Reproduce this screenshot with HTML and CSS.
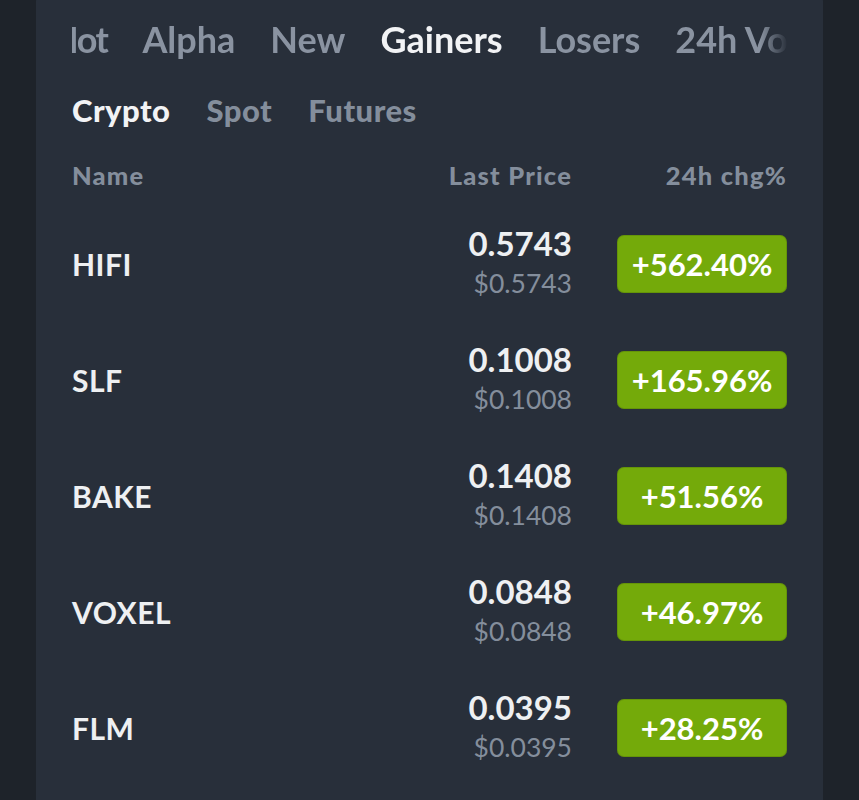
FILE: index.html
```html
<!DOCTYPE html>
<html lang="en">
<head>
<meta charset="utf-8">
<title>Markets</title>
<link rel="stylesheet" href="styles.css">
</head>
<body>
<div class="card">
  <nav class="tabs">
    <div class="tabs-strip">
      <span class="tab tab-first">Hot</span>
      <span class="tab">Alpha</span>
      <span class="tab">New</span>
      <span class="tab active">Gainers</span>
      <span class="tab">Losers</span>
      <span class="tab">24h Vol</span>
      <span class="tab">Market Cap</span>
    </div>
  </nav>
  <div class="subtabs">
    <span class="subtab active">Crypto</span>
    <span class="subtab">Spot</span>
    <span class="subtab">Futures</span>
  </div>
  <div class="head">
    <span class="col-name">Name</span>
    <span class="col-price">Last Price</span>
    <span class="col-chg">24h chg%</span>
  </div>
  <div class="rows">
    <div class="row">
      <span class="name">HIFI</span>
      <div class="price"><span class="last">0.5743</span><span class="usd">$0.5743</span></div>
      <span class="badge">+562.40%</span>
    </div>
    <div class="row">
      <span class="name">SLF</span>
      <div class="price"><span class="last">0.1008</span><span class="usd">$0.1008</span></div>
      <span class="badge">+165.96%</span>
    </div>
    <div class="row">
      <span class="name">BAKE</span>
      <div class="price"><span class="last">0.1408</span><span class="usd">$0.1408</span></div>
      <span class="badge">+51.56%</span>
    </div>
    <div class="row">
      <span class="name">VOXEL</span>
      <div class="price"><span class="last">0.0848</span><span class="usd">$0.0848</span></div>
      <span class="badge">+46.97%</span>
    </div>
    <div class="row">
      <span class="name">FLM</span>
      <div class="price"><span class="last">0.0395</span><span class="usd">$0.0395</span></div>
      <span class="badge">+28.25%</span>
    </div>
  </div>
</div>
</body>
</html>
```
FILE: styles.css
```css
html, body {
  margin: 0;
  padding: 0;
  background: #1e232a;
  height: 800px;
  overflow: hidden;
}
body {
  font-family: Lato, "Open Sans", sans-serif;
  color: #eaecef;
}
.card {
  margin: -16px 36px 0 36px;
  padding: 14px 36px 0 36px;
  background: #282f3a;
  border-radius: 18px;
  height: 820px;
}
.tabs {
  overflow: hidden;
  height: 82px;
  display: flex;
  align-items: center;
  -webkit-mask-image: linear-gradient(to right, #000 0, #000 688px, transparent 716px);
  mask-image: linear-gradient(to right, #000 0, #000 688px, transparent 716px);
}
.tabs-strip {
  display: flex;
  gap: 35px;
  margin-left: -21px;
  white-space: nowrap;
}
.tab {
  font-size: 36px;
  font-weight: 700;
  color: #8a93a1;
}
.tab-first { letter-spacing: -1.5px; }
.tab.active { color: #f2f3f5; }
.subtabs {
  display: flex;
  gap: 36px;
  height: 60px;
  align-items: center;
}
.subtab {
  font-size: 31px;
  font-weight: 900;
  letter-spacing: 0.5px;
  color: #848e9c;
}
.subtab.active { color: #f2f3f5; }
.head {
  display: flex;
  align-items: center;
  height: 62px;
  padding-top: 4px;
  font-size: 25.5px;
  font-weight: 900;
  letter-spacing: 1.2px;
  color: #848e9c;
}
.col-name { flex: 1; }
.col-price { width: 220px; text-align: right; }
.col-chg { width: 215px; text-align: right; }
.rows { display: flex; flex-direction: column; }
.row {
  display: flex;
  align-items: center;
  height: 116px;
}
.name {
  flex: 1;
  font-size: 30px;
  font-weight: 700;
  letter-spacing: 0.5px;
  color: #eef0f2;
}
.price {
  display: flex;
  flex-direction: column;
  align-items: flex-end;
  margin-right: 45px;
}
.last {
  font-size: 33px;
  font-weight: 700;
  line-height: 38px;
  color: #eef0f2;
}
.usd {
  font-size: 26.5px;
  font-weight: 400;
  line-height: 42px;
  color: #848e9c;
}
.badge {
  width: 170px;
  height: 58px;
  border-radius: 7px;
  background: #74aa0a;
  color: #fff;
  font-size: 31px;
  font-weight: 700;
  display: flex;
  align-items: center;
  justify-content: center;
  box-shadow: inset 0 0 0 1px rgba(0,0,0,0.12);
}
```
